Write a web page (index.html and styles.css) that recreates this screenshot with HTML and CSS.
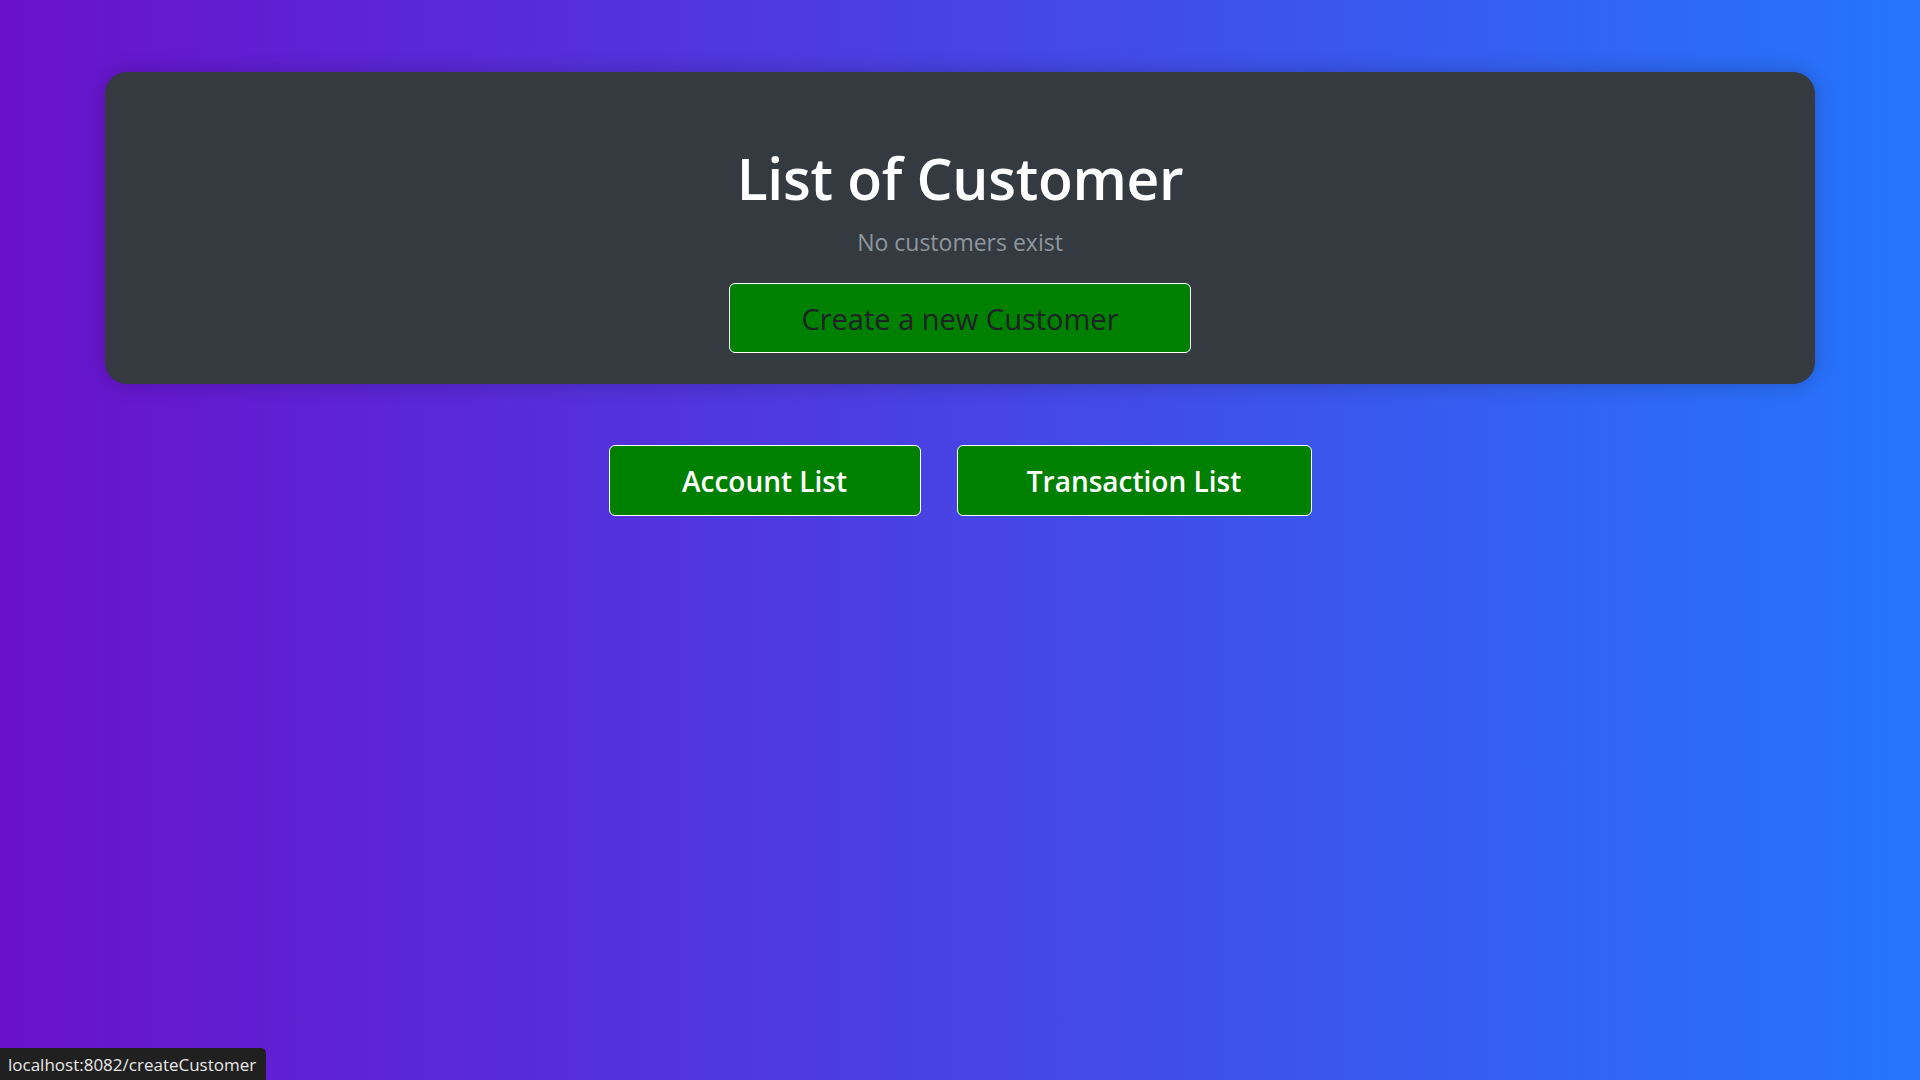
FILE: index.html
```html
<!DOCTYPE html>
<html lang="en">
<head>
<meta charset="utf-8">
<title>List of Customer</title>
<link rel="stylesheet" href="styles.css">
</head>
<body>
<main class="page">
  <section class="card">
    <h1 class="title">List of Customer</h1>
    <p class="subtitle">No customers exist</p>
    <a class="btn btn-create" href="#">Create a new Customer</a>
  </section>
  <nav class="links">
    <a class="btn btn-link btn-accounts" href="#">Account List</a>
    <a class="btn btn-link btn-transactions" href="#">Transaction List</a>
  </nav>
</main>
<div class="status">localhost:8082/createCustomer</div>
</body>
</html>
```
FILE: styles.css
```css
html, body {
  margin: 0;
  padding: 0;
  height: 100%;
}
body {
  background: linear-gradient(to right, #6a11cb, #2575fc);
  font-family: "Open Sans", "Noto Sans", sans-serif;
  overflow: hidden;
}
.page {
  display: flex;
  flex-direction: column;
  align-items: stretch;
  padding: 72px 105px 0;
}
.card {
  background: #343a40;
  border-radius: 22px;
  box-shadow: 0 0 20px rgba(0, 0, 0, 0.22);
  display: flex;
  flex-direction: column;
  align-items: center;
  padding: 70px 0 31px;
}
.title {
  margin: 0;
  color: #ffffff;
  font-size: 57px;
  line-height: 72px;
  font-weight: 600;
  letter-spacing: -0.3px;
}
.subtitle {
  margin: 12px 0 0;
  color: #8f969d;
  font-size: 23px;
  line-height: 32px;
}
.btn {
  display: flex;
  align-items: center;
  justify-content: center;
  box-sizing: border-box;
  height: 70px;
  border: 1px solid #ffffff;
  border-radius: 6px;
  background: #008000;
  text-decoration: none;
}
.btn-create {
  margin-top: 25px;
  width: 462px;
  color: #1f2226;
  font-size: 29px;
}
.links {
  display: flex;
  justify-content: center;
  gap: 36px;
  margin-top: 61px;
}
.btn-link {
  height: 71px;
  color: #ffffff;
  font-size: 28px;
  font-weight: 600;
}
.btn-accounts {
  width: 312px;
}
.btn-transactions {
  width: 355px;
}
.status {
  position: fixed;
  left: 0;
  bottom: 0;
  height: 32px;
  padding: 0 10px 0 8px;
  display: flex;
  align-items: center;
  background: #202020;
  color: #e8e8e8;
  border-top-right-radius: 5px;
  font-family: "Open Sans", sans-serif;
  font-size: 17px;
}
```
